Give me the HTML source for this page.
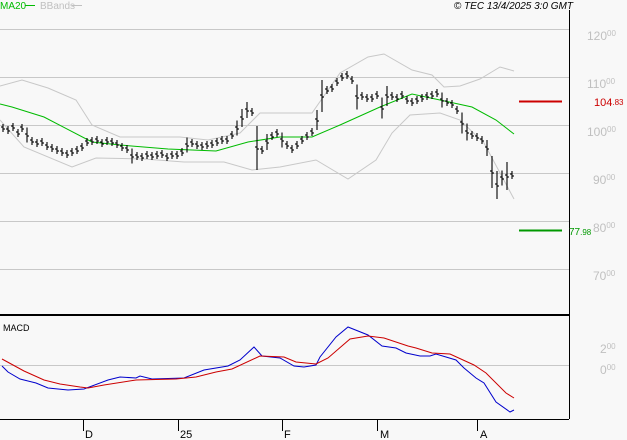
<!DOCTYPE html>
<html><head><meta charset="utf-8"><style>
html,body{margin:0;padding:0;background:#f8f8f8;}
svg{display:block;font-family:"Liberation Sans",sans-serif;}
</style></head><body>
<svg id="c" width="627" height="440" xmlns="http://www.w3.org/2000/svg">
<rect width="627" height="440" fill="#f8f8f8"/>
<g stroke="#c8c8c8" stroke-width="1">
<line x1="0" y1="29.5" x2="569" y2="29.5"/>
<line x1="0" y1="77.5" x2="569" y2="77.5"/>
<line x1="0" y1="125.5" x2="569" y2="125.5"/>
<line x1="0" y1="173.5" x2="569" y2="173.5"/>
<line x1="0" y1="221.5" x2="569" y2="221.5"/>
<line x1="0" y1="269.5" x2="569" y2="269.5"/>
<line x1="0" y1="365.5" x2="569" y2="365.5"/>
</g>
<line x1="569.5" y1="10" x2="569.5" y2="419" stroke="#000"/>
<line x1="0" y1="315" x2="569" y2="315" stroke="#000" stroke-width="2"/>
<line x1="0" y1="419.5" x2="569" y2="419.5" stroke="#000"/>
<g stroke="#000">
<line x1="83.5" y1="419" x2="83.5" y2="431"/>
<line x1="178.5" y1="419" x2="178.5" y2="431"/>
<line x1="282.5" y1="419" x2="282.5" y2="431"/>
<line x1="377.5" y1="419" x2="377.5" y2="431"/>
<line x1="477.5" y1="419" x2="477.5" y2="431"/>
</g>
<g font-size="11" fill="#000">
<text x="85" y="438">D</text><text x="180" y="438">25</text><text x="284" y="438">F</text><text x="380" y="438">M</text><text x="480" y="438">A</text>
</g>
<g font-size="12" fill="#c0c0c0">
<text x="587" y="40">120<tspan font-size="8" dy="-4">00</tspan></text>
<text x="587" y="88">110<tspan font-size="8" dy="-4">00</tspan></text>
<text x="587" y="136">100<tspan font-size="8" dy="-4">00</tspan></text>
<text x="593" y="184">90<tspan font-size="8" dy="-4">00</tspan></text>
<text x="593" y="232">80<tspan font-size="8" dy="-4">00</tspan></text>
<text x="593" y="280">70<tspan font-size="8" dy="-4">00</tspan></text>
<text x="600" y="353">2<tspan font-size="8" dy="-4">00</tspan></text>
<text x="600" y="374">0<tspan font-size="8" dy="-4">00</tspan></text>
</g>
<line x1="519" y1="101.5" x2="562" y2="101.5" stroke="#cc0000" stroke-width="2"/>
<text x="594" y="106" font-size="11" fill="#cc0000">104<tspan font-size="8" dy="-1">.83</tspan></text>
<line x1="519" y1="230.5" x2="562" y2="230.5" stroke="#009900" stroke-width="2"/>
<text x="569" y="235" font-size="10" fill="#009900">77<tspan font-size="8">.98</tspan></text>
<text x="0" y="9" font-size="10" fill="#00bb00">MA20</text>
<line x1="25" y1="5.5" x2="35" y2="5.5" stroke="#00bb00"/>
<text x="40" y="9" font-size="10" fill="#c0c0c0">BBands</text>
<line x1="72" y1="5.5" x2="82" y2="5.5" stroke="#c0c0c0"/>
<text x="573" y="9" font-size="10" font-style="italic" fill="#000" text-anchor="end">© TEC 13/4/2025 3:0 GMT</text>
<text x="3" y="331" font-size="9" fill="#000">MACD</text>
<g fill="none" stroke-width="1">
<polyline stroke="#c8c8c8" points="0,86 22,80 48,88 76,100 92,125 120,137 180,137 208,140 240,133 260,113 312,113 340,73 368,57 384,54 412,70 432,75 444,87 460,86 480,79 500,67 514,71"/>
<polyline stroke="#c8c8c8" points="0,120 24,147 72,167 96,158 144,159 184,162 224,162 252,170 280,167 316,160 348,179 376,160 392,133 410,115 440,113 460,120 484,143 514,199"/>
<polyline stroke="#00bb00" points="0,104 12,107 44,117 92,142 120,145 168,149 216,151 248,142 280,137 312,137 340,125 380,107 412,94 440,100 472,107 496,120 514,134"/>
<polyline stroke="#0000cc" points="2,366 8,372 20,379 36,383 48,388 68,390 84,389 108,380 120,377 136,378 140,376 152,379 184,378 204,370 228,366 240,360 254,347 262,356 280,358 294,366 304,367 316,365 320,357 336,337 348,327 368,335 382,346 396,348 406,353 420,356 430,356 436,354 456,360 464,368 476,378 484,383 496,402 510,412 514,410"/>
<polyline stroke="#cc0000" points="2,359 24,371 44,380 60,384 80,387 88,388 104,385 136,380 176,379 196,377 216,372 232,369 260,356 284,357 296,362 316,364 328,358 350,339 368,336 384,338 408,346 416,348 432,353 450,354 474,365 486,373 506,393 514,398"/>
</g>
<g id="bars" stroke="#000" stroke-width="1.1"></g>
</svg>
<script>
var d=[[3,128],[8,130],[13,127],[18,133],[22,128],[27,135],[32,141],[37,143],[42,142],[47,146],[52,148],[57,150],[62,152],[67,154],[72,152],[77,150],[82,147],[87,142],[92,141],[97,140],[102,143],[107,141],[112,142],[117,144],[122,147],[127,149],[132,156],[137,156],[142,157],[147,155],[152,156],[157,155],[162,154],[167,157],[172,155],[177,155],[182,152],[187,145],[192,143],[197,145],[202,146],[207,145],[212,144],[217,142],[222,140],[227,140],[232,135],[237,128],[242,118],[247,110],[252,112],[257,148],[262,150],[267,142],[272,136],[277,133],[282,140],[287,145],[292,149],[297,145],[302,140],[307,136],[312,132],[317,120],[322,96],[327,90],[332,88],[337,82],[342,77],[347,75],[352,80],[357,97],[362,96],[367,98],[372,98],[377,95],[382,108],[387,96],[392,96],[397,98],[402,95],[407,100],[412,102],[417,100],[422,98],[427,96],[432,95],[437,93],[442,100],[447,102],[452,104],[457,110],[462,123],[467,132],[472,135],[477,137],[482,140],[487,148],[492,172],[497,185],[502,178],[507,176],[512,175]];
var g=document.getElementById('bars'),s='';
for(var i=0;i<d.length;i++){var x=d[i][0],y=d[i][1],h=4;
if(i>0&&Math.abs(d[i][1]-d[i-1][1])>6)h=Math.abs(d[i][1]-d[i-1][1])/2+4;
if(x==497)h=14;if(x==507)h=14;
s+='<line x1="'+x+'" y1="'+(y-h)+'" x2="'+x+'" y2="'+(y+h)+'"/><line x1="'+(x-2)+'" y1="'+(y-1)+'" x2="'+x+'" y2="'+(y-1)+'"/><line x1="'+x+'" y1="'+(y+1)+'" x2="'+(x+2)+'" y2="'+(y+1)+'"/>';}
g.innerHTML=s;
</script>
</body></html>
